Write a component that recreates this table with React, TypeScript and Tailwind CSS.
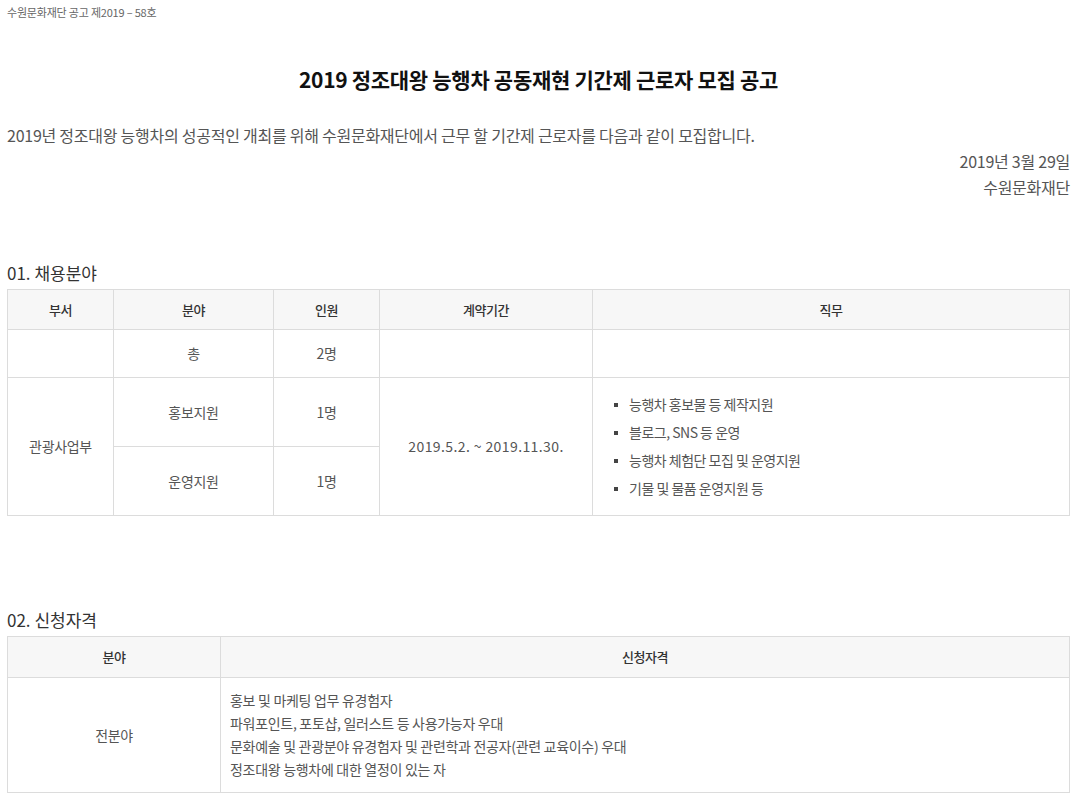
import React from "react";

const font = { fontFamily: '"Noto Sans CJK KR", "Noto Sans", sans-serif' };

const duties = [
  "능행차 홍보물 등 제작지원",
  "블로그, SNS 등 운영",
  "능행차 체험단 모집 및 운영지원",
  "기물 및 물품 운영지원 등",
];

const quals = [
  "홍보 및 마케팅 업무 유경험자",
  "파워포인트, 포토샵, 일러스트 등 사용가능자 우대",
  "문화예술 및 관광분야 유경험자 및 관련학과 전공자(관련 교육이수) 우대",
  "정조대왕 능행차에 대한 열정이 있는 자",
];

const th = "border border-[#dcdcdc] bg-[#f7f7f7] text-[13px] font-medium text-[#333] tracking-[-0.5px] text-center";
const td = "border border-[#dcdcdc] text-[14px] text-[#555] tracking-[-0.3px] text-center";

export default function App() {
  return (
    <div className="bg-white min-h-screen w-[1087px]" style={font}>
      <div className="pl-[7px] pr-[17px]">
        <div className="pt-[4px] text-[11px] leading-[16px] text-[#666] tracking-[-0.2px]">
          수원문화재단 공고 제2019 – 58호
        </div>

        <h1 className="mt-[45px] text-center text-[21px] leading-[28px] font-semibold text-[#111] tracking-[-0.3px]">
          2019 정조대왕 능행차 공동재현 기간제 근로자 모집 공고
        </h1>

        <p className="mt-[29px] text-[16px] leading-[26px] text-[#555] tracking-[-0.25px]">
          2019년 정조대왕 능행차의 성공적인 개최를 위해 수원문화재단에서 근무 할 기간제 근로자를 다음과 같이 모집합니다.
        </p>
        <div className="text-right text-[16px] leading-[26px] text-[#555] tracking-[-0.25px]">
          <div>2019년 3월 29일</div>
          <div>수원문화재단</div>
        </div>

        <h2 className="mt-[59px] mb-[2px] text-[17px] leading-[28px] text-[#333]">01. 채용분야</h2>
        <table className="w-[1063px] border-collapse table-fixed">
          <colgroup>
            <col className="w-[106px]" />
            <col className="w-[160px]" />
            <col className="w-[106px]" />
            <col className="w-[213px]" />
            <col />
          </colgroup>
          <thead>
            <tr className="h-[40px]">
              <th className={th}>부서</th>
              <th className={th}>분야</th>
              <th className={th}>인원</th>
              <th className={th}>계약기간</th>
              <th className={th}>직무</th>
            </tr>
          </thead>
          <tbody>
            <tr className="h-[48px]">
              <td className={td}></td>
              <td className={td}>총</td>
              <td className={td}>2명</td>
              <td className={td}></td>
              <td className={td}></td>
            </tr>
            <tr className="h-[69px]">
              <td className={td} rowSpan={2}>관광사업부</td>
              <td className={td}>홍보지원</td>
              <td className={td}>1명</td>
              <td className="border border-[#dcdcdc] text-[14px] text-[#555] tracking-[0.4px] text-center" rowSpan={2}>
                2019.5.2. ~ 2019.11.30.
              </td>
              <td className="border border-[#dcdcdc] text-left px-[20px]" rowSpan={2}>
                <ul className="flex flex-col">
                  {duties.map((d) => (
                    <li key={d} className="flex items-center h-[28px] text-[14px] text-[#555] tracking-[-0.5px]">
                      <span className="w-[4px] h-[4px] bg-[#444] mr-[11px] ml-[1px]" />
                      {d}
                    </li>
                  ))}
                </ul>
              </td>
            </tr>
            <tr className="h-[69px]">
              <td className={td}>운영지원</td>
              <td className={td}>1명</td>
            </tr>
          </tbody>
        </table>

        <h2 className="mt-[90px] mb-[2px] text-[17px] leading-[28px] text-[#333]">02. 신청자격</h2>
        <table className="w-[1063px] border-collapse table-fixed">
          <colgroup>
            <col className="w-[213px]" />
            <col />
          </colgroup>
          <thead>
            <tr className="h-[41px]">
              <th className={th}>분야</th>
              <th className={th}>신청자격</th>
            </tr>
          </thead>
          <tbody>
            <tr className="h-[115px]">
              <td className={td}>전분야</td>
              <td className="border border-[#dcdcdc] px-[9px] text-left">
                {quals.map((q) => (
                  <div key={q} className="text-[14px] leading-[23px] text-[#555] tracking-[-0.3px]">
                    {q}
                  </div>
                ))}
              </td>
            </tr>
          </tbody>
        </table>
      </div>
    </div>
  );
}
